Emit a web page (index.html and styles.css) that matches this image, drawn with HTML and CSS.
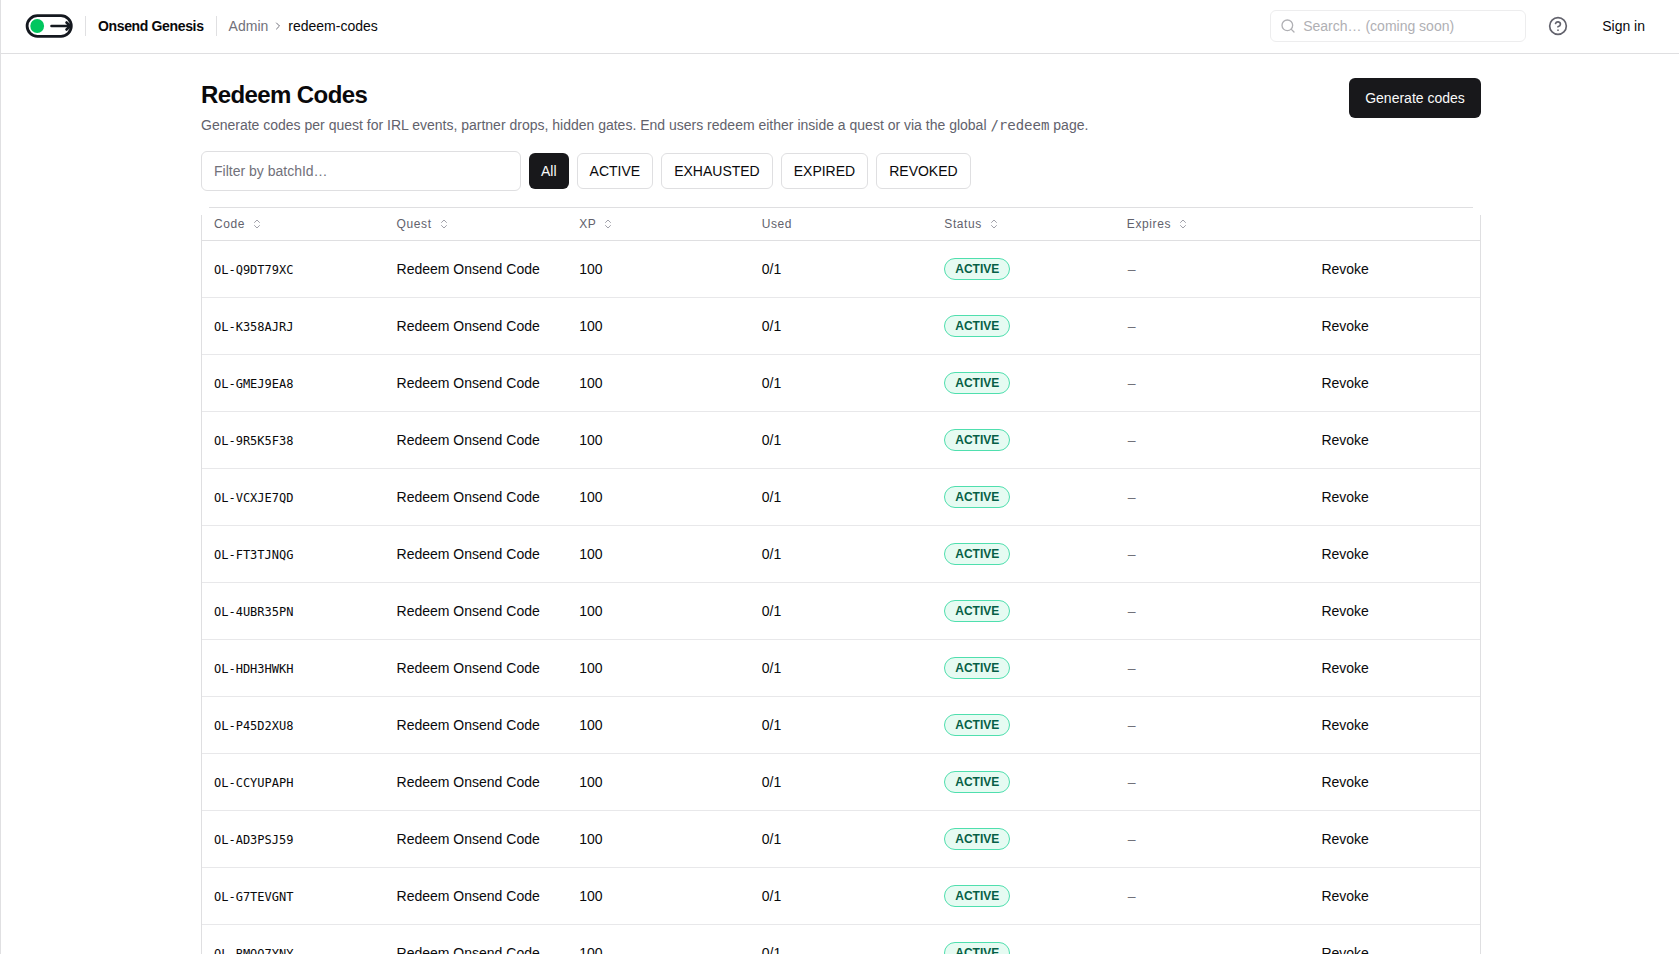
FILE: index.html
```html
<!DOCTYPE html>
<html lang="en">
<head>
    <meta charset="UTF-8">
    <meta name="viewport" content="width=device-width, initial-scale=1.0">
    <title>Redeem Codes - Onsend Genesis</title>
    <link rel="stylesheet" href="styles.css">
</head>
<body>
    <header class="topbar">
        <svg class="logo" width="48" height="24" viewBox="0 0 48 24">
            <rect x="2.1" y="1.7" width="44.2" height="20.6" rx="10.3" fill="#fff" stroke="#14181f" stroke-width="2.8"/>
            <circle cx="12.2" cy="12" r="6.9" fill="#00c65e"/>
            <path d="M26.5 12h18.5M41.5 8.5l4 3.5-4 3.5" fill="none" stroke="#14181f" stroke-width="2.6" stroke-linecap="round" stroke-linejoin="round"/>
        </svg>
        <span class="divider"></span>
        <strong class="brand">Onsend Genesis</strong>
        <span class="divider"></span>
        <nav class="breadcrumb">
            <span class="muted crumb-root">Admin</span>
            <svg width="12" height="12" viewBox="0 0 24 24" fill="none" stroke="#71717a" stroke-width="2" stroke-linecap="round" stroke-linejoin="round"><path d="m9 18 6-6-6-6"/></svg>
            <span class="crumb-page">redeem-codes</span>
        </nav>
        <div class="search">
            <svg width="16" height="16" viewBox="0 0 24 24" fill="none" stroke="currentColor" stroke-width="2" stroke-linecap="round" stroke-linejoin="round"><circle cx="11" cy="11" r="8"/><path d="m21 21-4.3-4.3"/></svg>
            <span>Search… (coming soon)</span>
        </div>
        <svg class="help" width="20" height="20" viewBox="0 0 24 24" fill="none" stroke="#62626c" stroke-width="2" stroke-linecap="round" stroke-linejoin="round"><circle cx="12" cy="12" r="10"/><path d="M9.09 9a3 3 0 0 1 5.83 1c0 2-3 3-3 3"/><path d="M12 17h.01"/></svg>
        <a class="signin">Sign in</a>
    </header>

    <main class="container">
        <div class="page-head">
            <div>
                <h1>Redeem Codes</h1>
                <p class="subtitle">Generate codes per quest for IRL events, partner drops, hidden gates. End users redeem either inside a quest or via the global <code>/redeem</code> page.</p>
            </div>
            <button class="generate">Generate codes</button>
        </div>

        <div class="filters">
            <input class="filter-input" type="text" placeholder="Filter by batchId…">
            <button class="chip selected">All</button>
            <button class="chip">ACTIVE</button>
            <button class="chip">EXHAUSTED</button>
            <button class="chip">EXPIRED</button>
            <button class="chip">REVOKED</button>
        </div>

        <div class="table">
            <div class="row head">
                <span class="sortable">Code</span>
                <span class="sortable">Quest</span>
                <span class="sortable">XP</span>
                <span>Used</span>
                <span class="sortable">Status</span>
                <span class="sortable">Expires</span>
                <span></span>
            </div>
            <div id="rows"></div>
        </div>
    </main>

    <script>
        const codes = ['Q9DT79XC', 'K358AJRJ', 'GMEJ9EA8', '9R5K5F38', 'VCXJE7QD', 'FT3TJNQG', '4UBR35PN', 'HDH3HWKH', 'P45D2XU8', 'CCYUPAPH', 'AD3PSJ59', 'G7TEVGNT', 'BMQQ7YNY'];

        // One row per code
        document.getElementById('rows').innerHTML = codes.map(code => `
            <div class="row">
                <span class="code">OL-${code}</span>
                <span>Redeem Onsend Code</span>
                <span>100</span>
                <span>0/1</span>
                <span><b class="badge">ACTIVE</b></span>
                <span class="muted expires">–</span>
                <span class="revoke">Revoke</span>
            </div>`).join('');

        // Sort arrows next to the sortable headers
        document.querySelectorAll('.sortable').forEach(el => {
            el.innerHTML += '<svg width="12" height="12" viewBox="0 0 24 24" fill="none" stroke="#a1a1aa" stroke-width="2" stroke-linecap="round" stroke-linejoin="round"><path d="m7 15 5 5 5-5M7 9l5-5 5 5"/></svg>';
        });
    </script>
</body>
</html>
```

FILE: styles.css
```css
* {
    margin: 0;
    padding: 0;
    box-sizing: border-box;
}

body {
    font-family: "Liberation Sans", Arial, sans-serif;
    font-size: 14px;
    line-height: 20px;
    color: #09090b;
    background-color: #fff;
    border-left: 1px solid #e0e0e2;
    height: 954px;
    overflow: hidden;
}

button, input {
    font: inherit;
    color: inherit;
}

.muted {
    color: #71717a;
}

.topbar {
    display: flex;
    align-items: center;
    height: 54px;
    padding: 0 34px 2px 24px;
    border-bottom: 1px solid #dfdfe1;
}

.brand {
    letter-spacing: -0.35px;
}

.divider {
    width: 1px;
    height: 20px;
    margin: 0 12px;
    background-color: #e0e0e2;
}

.breadcrumb {
    display: flex;
    align-items: center;
    gap: 4px;
}

.search {
    display: flex;
    align-items: center;
    gap: 7px;
    width: 256px;
    height: 32px;
    margin-left: auto;
    padding: 0 9px;
    border: 1px solid #ededee;
    border-radius: 6px;
    color: #b0b0b4;
}

.help {
    margin: 0 34px 0 22px;
}

.container {
    width: 1280px;
    margin: 24px 0 0 200px;
}

.page-head {
    display: flex;
    justify-content: space-between;
    align-items: flex-start;
    height: 73px;
}

h1 {
    padding-top: 1px;
    margin-bottom: 4px;
    font-size: 24px;
    line-height: 32px;
    letter-spacing: -0.6px;
}

.subtitle {
    color: #62626c;
}

.subtitle code {
    font: 14px "DejaVu Sans Mono", monospace;
}

.generate {
    width: 132px;
    height: 40px;
    border: none;
    border-radius: 6px;
    background-color: #18181b;
    color: #fafafa;
}

.filters {
    display: flex;
    align-items: center;
    gap: 8px;
    height: 40px;
    margin-bottom: 16px;
}

.filter-input {
    width: 320px;
    height: 40px;
    padding: 0 12px;
    border: 1px solid #dfdfe1;
    border-radius: 6px;
}

.filter-input::placeholder {
    color: #71717a;
}

.chip {
    height: 36px;
    padding: 0 12px;
    border: 1px solid #dfdfe1;
    border-radius: 6px;
    background-color: #fff;
}

.chip.selected {
    border: none;
    background-color: #18181b;
    color: #fafafa;
}

.table {
    position: relative;
    border: 1px solid #dfdfe1;
}

.table::before,
.table::after {
    content: "";
    position: absolute;
    top: -1px;
    width: 8px;
    height: 8px;
    background-color: #fff;
}

.table::before {
    left: -1px;
}

.table::after {
    right: -1px;
}

.row {
    display: grid;
    grid-template-columns: repeat(7, 1fr);
    align-items: center;
    height: 57px;
    border-bottom: 1px solid #e8e8ea;
}

.row > span {
    padding-left: 12px;
}

.head {
    height: 33px;
    border-bottom-color: #dfdfe1;
    font-size: 12px;
    letter-spacing: 0.6px;
    color: #62626c;
}

.sortable {
    display: flex;
    align-items: center;
    gap: 6px;
}

.code {
    padding-top: 2px;
    font: 12px "DejaVu Sans Mono", monospace;
}

.badge {
    display: inline-block;
    height: 22px;
    padding: 0 10px;
    border: 1px solid #4fdfae;
    border-radius: 11px;
    background-color: #e6fbf2;
    color: #065f46;
    font-size: 12px;
    line-height: 20px;
    vertical-align: middle;
}

.row > .expires {
    padding-left: 13px;
}

.row > .revoke {
    padding-left: 24px;
}
```
